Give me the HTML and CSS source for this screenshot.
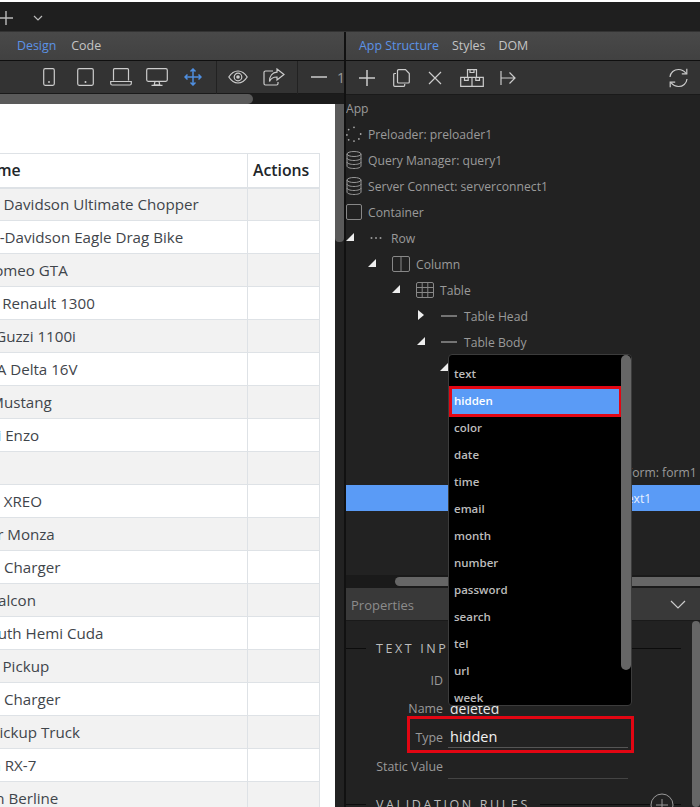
FILE: index.html
```html
<!DOCTYPE html>
<html lang="en">
<head>
<meta charset="utf-8">
<title>App Structure</title>
<link rel="stylesheet" href="styles.css">
</head>
<body>
<div class="app">
  <div class="titlebar">
    <svg class="tb-plus" width="14" height="18" viewBox="0 0 14 18"><path d="M6 2v14M-3 9h16" stroke="#bbb" stroke-width="1.400" fill="none"/></svg>
    <svg class="tb-chev" width="12" height="8" viewBox="0 0 12 8"><path d="M2 2l4 4 4-4" stroke="#bbb" stroke-width="1.200" fill="none"/></svg>
  </div>
  <div class="main">
    <section class="pane-left">
      <nav class="tabs tabs-left"><span class="tab active">Design</span><span class="tab">Code</span></nav>
      <div class="toolbar">
        <span class="slot"><svg width="12" height="18" viewBox="0 0 12 18"><rect x=".7" y=".7" width="10.600" height="16.600" rx="1.500" class="ico"/><circle cx="6" cy="14" r=".9" fill="#ccc"/></svg></span>
        <span class="slot"><svg width="17" height="18" viewBox="0 0 17 18"><rect x=".7" y=".7" width="15.600" height="16.600" rx="1.500" class="ico"/><circle cx="8.500" cy="14" r="1" fill="#ccc"/></svg></span>
        <span class="slot"><svg width="22" height="18" viewBox="0 0 22 18"><path d="M3.500 12.500V1.700a1 1 0 0 1 1-1h13a1 1 0 0 1 1 1v10.800M.7 13.500h20.600v2a1.500 1.500 0 0 1-1.500 1.500H2.200a1.500 1.500 0 0 1-1.500-1.500z" class="ico"/></svg></span>
        <span class="slot"><svg width="22" height="18" viewBox="0 0 22 18"><rect x=".7" y=".7" width="20.600" height="12.600" rx="1.500" class="ico"/><path d="M9 13.500l-.8 3.300h5.600L13 13.500M5.500 17.300h11" class="ico"/></svg></span>
        <span class="slot"><svg width="18" height="18" viewBox="0 0 18 18"><path d="M9 1v16M1 9h16M6.500 3.500L9 1l2.500 2.500M6.500 14.500L9 17l2.500-2.500M3.500 6.500L1 9l2.500 2.500M14.500 6.500L17 9l-2.500 2.500" stroke="#4f8fe0" stroke-width="1.500" fill="none"/></svg></span>
        <i class="sep"></i>
        <span class="slot"><svg width="20" height="14" viewBox="0 0 20 14"><path d="M.8 7C3.500 2.800 6.500 1 10 1s6.500 1.800 9.200 6C16.500 11.200 13.500 13 10 13S3.500 11.200.8 7z" class="ico"/><circle cx="10" cy="7" r="3.800" class="ico"/><circle cx="10" cy="7" r="1.800" fill="#ccc"/></svg></span>
        <span class="slot"><svg width="22" height="18" viewBox="0 0 22 18"><path d="M10 3H2.500A1.500 1.500 0 0 0 1 4.500v11A1.500 1.500 0 0 0 2.500 17h11a1.500 1.500 0 0 0 1.500-1.500V14" class="ico"/><path d="M14 1l7 5.500-7 5.500V9c-3.500 0-6 1-7.500 4.500C6.500 8 9.500 4.500 14 4.200z" class="ico"/></svg></span>
        <i class="sep"></i>
        <span class="slot"><svg width="16" height="4" viewBox="0 0 16 4"><path d="M0 2h16" stroke="#ccc" stroke-width="1.500"/></svg></span>
        <span class="zoomval">1</span>
      </div>
      <div class="hscroll-left"><i class="hthumb-left"></i></div>
      <div class="canvas-wrap">
        <div class="canvas">
          <table class="cars">
            <thead><tr><th class="c-name">Name</th><th class="c-act">Actions</th></tr></thead>
            <tbody>
              <tr><td>Harley Davidson Ultimate Chopper</td><td></td></tr>
              <tr><td>Harley-Davidson Eagle Drag Bike</td><td></td></tr>
              <tr><td>Alfa Romeo GTA</td><td></td></tr>
              <tr><td>Alpine Renault 1300</td><td></td></tr>
              <tr><td>Moto Guzzi 1100i</td><td></td></tr>
              <tr><td>LANCIA Delta 16V</td><td></td></tr>
              <tr><td>Ford Mustang</td><td></td></tr>
              <tr><td>Pagani Enzo</td><td></td></tr>
              <tr><td></td><td></td></tr>
              <tr><td>Suzuki XREO</td><td></td></tr>
              <tr><td>Master Monza</td><td></td></tr>
              <tr><td>Dodge Charger</td><td></td></tr>
              <tr><td>Ford Falcon</td><td></td></tr>
              <tr><td>Plymouth Hemi Cuda</td><td></td></tr>
              <tr><td>Austin Pickup</td><td></td></tr>
              <tr><td>Dodge Charger</td><td></td></tr>
              <tr><td>Ford Pickup Truck</td><td></td></tr>
              <tr><td>Mazda RX-7</td><td></td></tr>
              <tr><td>Lincoln Berline</td><td></td></tr>
            </tbody>
          </table>
        </div>
        <div class="vscroll-canvas"><i class="vthumb-canvas"></i></div>
      </div>
    </section>
    <section class="pane-right">
      <nav class="tabs tabs-right"><span class="tab active">App Structure</span><span class="tab">Styles</span><span class="tab">DOM</span></nav>
      <div class="toolbar toolbar-right">
        <span class="rslot"><svg width="16" height="16" viewBox="0 0 16 16"><path d="M8 0v16M0 8h16" stroke="#ccc" stroke-width="1.500"/></svg></span>
        <span class="rslot"><svg width="17" height="18" viewBox="0 0 17 18"><path d="M5.500.7h7l3.800 3.800v8.500a1 1 0 0 1-1 1h-9.800a1 1 0 0 1-1-1V1.700a1 1 0 0 1 1-1zM3 4.500H1.700a1 1 0 0 0-1 1v10.800a1 1 0 0 0 1 1h9a1 1 0 0 0 1-1V15" class="ico"/></svg></span>
        <span class="rslot"><svg width="14" height="14" viewBox="0 0 14 14"><path d="M1 1l12 12M13 1L1 13" stroke="#ccc" stroke-width="1.200"/></svg></span>
        <span class="rslot wide"><svg width="24" height="18" viewBox="0 0 24 18"><path d="M7.500.7h9v7.600h-9zM.7 8.300h11.300v9H.7zM12 8.300h11.300v9H12zM10 .7v2.800h4V.7M4.500 8.300v3h3.700v-3M15.800 8.300v3h3.700v-3" class="ico"/></svg></span>
        <span class="rslot"><svg width="16" height="14" viewBox="0 0 16 14"><path d="M1 0v14M1 7h14M9.500 1.500L15 7l-5.500 5.500" class="ico"/></svg></span>
        <span class="rslot refresh"><svg width="19" height="20" viewBox="0 0 19 20"><path d="M1 9C1.500 4.500 5 1.500 9.500 1.500c3 0 5.500 1.200 7.500 3.800M18 11c-.5 4.500-4 7.500-8.500 7.500-3 0-5.500-1.200-7.500-3.800" class="ico"/><path d="M17.800.8v5h-5M1.200 19.200v-5h5" class="ico"/></svg></span>
      </div>
      <div class="tree">
        <div class="node lv-root"><span>App</span></div>
        <div class="node lv0"><svg class="nico" width="18" height="18" viewBox="0 0 18 18" fill="#aaa"><circle cx="9" cy="1.500" r="1"/><circle cx="3" cy="4" r="1"/><circle cx="1" cy="10" r="1"/><circle cx="3" cy="15.500" r="1"/><circle cx="9" cy="17" r="1"/><circle cx="14.500" cy="14.500" r="1"/><circle cx="16.500" cy="9" r="1"/></svg><span>Preloader: preloader1</span></div>
        <div class="node lv0"><svg class="nico" width="16" height="18" viewBox="0 0 16 18"><use href="#db"/></svg><span>Query Manager: query1</span></div>
        <div class="node lv0"><svg class="nico" width="16" height="18" viewBox="0 0 16 18"><use href="#db"/></svg><span>Server Connect: serverconnect1</span></div>
        <div class="node lv0"><svg class="nico" width="16" height="16" viewBox="0 0 16 16"><rect x=".5" y=".5" width="15" height="15" rx="1.500" class="dim"/></svg><span>Container</span></div>
        <div class="node lv1"><i class="tri"></i><svg class="nico" width="12" height="4" viewBox="0 0 12 4" fill="#999"><circle cx="1.500" cy="2" r="1"/><circle cx="6" cy="2" r="1"/><circle cx="10.500" cy="2" r="1"/></svg><span>Row</span></div>
        <div class="node lv2"><i class="tri"></i><svg class="nico" width="18" height="16" viewBox="0 0 18 16"><rect x=".5" y=".5" width="17" height="15" rx="1.500" class="dim"/><path d="M9 .5v15" class="dim"/></svg><span>Column</span></div>
        <div class="node lv3"><i class="tri"></i><svg class="nico" width="18" height="16" viewBox="0 0 18 16"><rect x=".5" y=".5" width="17" height="15" rx="1.500" class="dim"/><path d="M.5 5.500h17M.5 10.500h17M6.200 .5v15M11.800 .5v15" class="dim"/></svg><span>Table</span></div>
        <div class="node lv4"><i class="tri-right"></i><svg class="nico" width="16" height="2" viewBox="0 0 16 2"><path d="M0 1h16" stroke="#999" stroke-width="1.400"/></svg><span>Table Head</span></div>
        <div class="node lv4"><i class="tri"></i><svg class="nico" width="16" height="2" viewBox="0 0 16 2"><path d="M0 1h16" stroke="#999" stroke-width="1.400"/></svg><span>Table Body</span></div>
        <div class="node lv5"><i class="tri"></i></div>
        <div class="node"></div>
        <div class="node"></div>
        <div class="node"></div>
        <div class="node lv-form"><span>Form: form1</span></div>
        <div class="node lv-input selected"><span>Input: text1</span></div>
      </div>
      <div class="hscroll-right"><i class="hthumb-right"></i></div>
      <div class="props-head"><span>Properties</span><svg width="16" height="9" viewBox="0 0 16 9"><path d="M1 1l7 7 7-7" stroke="#ccc" stroke-width="1.200" fill="none"/></svg></div>
      <div class="props">
        <div class="props-body">
          <h3 class="group"><span>TEXT INPUT</span></h3>
          <div class="field f-id"><label>ID</label><div class="value"></div></div>
          <div class="field f-name"><label>Name</label><div class="value">deleted</div></div>
          <div class="field f-type"><label>Type</label><div class="value">hidden</div></div>
          <div class="field f-static"><label>Static Value</label><div class="value underlined"></div></div>
          <h3 class="group g2"><span>VALIDATION RULES</span><svg class="addrule" width="24" height="24" viewBox="0 0 24 24"><circle cx="12" cy="12" r="11" stroke="#999" fill="none"/><path d="M12 6v12M6 12h12" stroke="#999"/></svg></h3>
        </div>
        <div class="vscroll-props"></div>
      </div>
    </section>
  </div>
  <ul class="dropdown">
    <li>text</li>
    <li class="picked">hidden</li>
    <li>color</li>
    <li>date</li>
    <li>time</li>
    <li>email</li>
    <li>month</li>
    <li>number</li>
    <li>password</li>
    <li>search</li>
    <li>tel</li>
    <li>url</li>
    <li>week</li>
  </ul>
  <svg class="defs" width="0" height="0"><defs><g id="db" fill="none" stroke="#999"><ellipse cx="8" cy="3" rx="7" ry="2.500"/><path d="M1 3v12c0 1.400 3.100 2.500 7 2.500s7-1.100 7-2.500V3M1 7c0 1.400 3.100 2.500 7 2.500S15 8.400 15 7M1 11c0 1.400 3.100 2.500 7 2.500s7-1.100 7-2.500"/></g></defs></svg>
</div>
</body>
</html>
```

FILE: styles.css
```css
*, *::before, *::after { box-sizing: border-box; }
html, body { margin: 0; padding: 0; background: #fff; }
body { font-family: "Open Sans", "Noto Sans", sans-serif; font-size: 12.400px; }
.app { position: relative; width: 700px; height: 805px; margin-top: 2px; overflow: hidden; background: #222; }
.defs { position: absolute; }

.titlebar { height: 30px; background: #1f1f1f; display: flex; align-items: center; gap: 18px; border-bottom: 1px solid #333; }
.tb-chev { margin-top: 2px; }
.tb-plus { margin-top: 2px; flex: none; }

.main { display: flex; height: 775px; }
.pane-left { width: 344px; flex: none; display: flex; flex-direction: column; overflow: hidden; }
.pane-right { flex: 1; min-width: 0; display: flex; flex-direction: column; border-left: 2px solid #111; overflow: hidden; }

.tabs { height: 29px; flex: none; display: flex; align-items: center; background: linear-gradient(#494949, #414141); border-bottom: 1px solid #0f0f0f; gap: 13px; padding-bottom: 1px; }
.tabs-left { padding-left: 17px; gap: 15px; }
.tabs-right { padding-left: 13px; }
.tab { color: #c4c4c4; }
.tab.active { color: #5c93e6; }

.toolbar { height: 33px; flex: none; display: flex; align-items: center; padding-left: 31px; background: #333; border-bottom: 1px solid #1a1a1a; }
.slot { width: 36px; flex: none; display: flex; justify-content: center; align-items: center; }
.sep { width: 1px; height: 33px; flex: none; background: #222; margin: 0 3px 0 5px; }
.zoomval { color: #999; font-size: 14px; flex: none; }
.ico { fill: none; stroke: #ccc; stroke-width: 1.200; }
.dim { fill: none; stroke: #888; stroke-width: 1; }

.toolbar-right { height: 34px; padding-left: 4px; padding-right: 12px; }
.rslot { width: 34px; flex: none; display: flex; justify-content: center; align-items: center; }
.rslot.wide { width: 39px; }
.rslot.refresh { width: 19px; margin-left: auto; }

.hscroll-left { height: 10px; flex: none; background: #1c1c1c; }
.hthumb-left { display: block; width: 253px; height: 10px; background: #5a5a5a; border-radius: 0 5px 5px 0; }

.canvas-wrap { flex: 1; display: flex; min-height: 0; }
.canvas { width: 335px; flex: none; background: #fff; overflow: hidden; padding-top: 49px; }
.vscroll-canvas { flex: 1; background: #222; }
.vthumb-canvas { display: block; height: 138px; background: #5a5a5a; border-radius: 0 0 4px 4px; }

.cars { border-collapse: collapse; table-layout: fixed; width: 366px; margin-left: -47px; font-size: 15.150px; color: #3f454b; }
.cars th, .cars td { border: 1px solid #dee2e6; padding: 0 12px; height: 33px; text-align: left; white-space: nowrap; overflow: hidden; }
.cars td:first-child { padding-left: 0; }
.cars th { height: 34px; border-bottom-width: 2px; color: #212529; font-weight: 600; font-size: 15.800px; }
.cars th.c-name { padding-left: 21px; width: 294px; }
.cars th.c-act { padding: 0 0 0 5px; width: 72px; }
.cars tbody tr:nth-child(odd) { background: #f2f2f2; }

.tree { height: 480px; flex: none; background: #222; color: #9a9a9a; overflow: hidden; }
.node { height: 26px; display: flex; align-items: center; white-space: nowrap; position: relative; }
.node span { font-size: 12.150px; }
.nico { flex: none; }
.lv0 .nico { width: 16px; margin-right: 6px; }
.lv1 { padding-left: 24px; }
.lv1 .nico { margin-right: 9px; }
.lv2 { padding-left: 46px; }
.lv2 .nico { margin-right: 6px; }
.lv3 { padding-left: 70px; }
.lv3 .nico { margin-right: 6px; }
.lv4 { padding-left: 95px; }
.lv4 .nico { margin-right: 7px; }
.lv-form { padding-left: 280px; }
.lv-input { padding-left: 240px; }
.selected { background: #5a9bf6; color: #e8f0ff; }
.tri { position: absolute; left: 0; top: 8px; width: 0; height: 0; border-style: solid; border-width: 0 0 8px 8px; border-color: transparent transparent #eee transparent; }
.lv2 .tri { left: 22px; }
.lv3 .tri { left: 46px; }
.lv4 .tri { left: 71px; }
.lv5 .tri { left: 94px; }
.tri-right { position: absolute; left: 72px; top: 7px; width: 0; height: 0; border-style: solid; border-width: 5.500px 0 5.500px 6px; border-color: transparent transparent transparent #eee; }

.hscroll-right { height: 13px; flex: none; background: #1a1a1a; padding: 2px 0 0 49px; }
.hthumb-right { display: block; height: 9px; background: #666; border-radius: 5px 0 0 5px; }

.props-head { height: 33px; flex: none; display: flex; align-items: center; justify-content: space-between; padding: 1px 14px 0 5px; background: #393939; border-bottom: 1px solid #1a1a1a; color: #8c8c8c; font-size: 13px; }
.props { flex: 1; display: flex; min-height: 0; }
.props-body { flex: 1; min-width: 0; }
.vscroll-props { width: 8px; flex: none; background: #666; border-radius: 4px; }

.group { position: relative; margin: 18px 11px 0 0; height: 18px; display: flex; align-items: center; font-size: 12.500px; font-weight: 400; letter-spacing: 2.600px; color: #bdbdbd; }
.group::before { content: ""; width: 20px; height: 1px; background: #0c0c0c; margin-right: 10px; flex: none; }
.group::after { content: ""; flex: 1; height: 1px; background: #0c0c0c; margin-left: 10px; }
.g2 { margin-top: 16px; }
.addrule { position: absolute; right: 7px; top: -2px; background: #222; }

.field { display: flex; align-items: center; height: 28px; }
.field label { width: 97px; margin-right: 5px; text-align: right; color: #9a9a9a; flex: none; }
.value { width: 180px; height: 100%; display: flex; align-items: center; padding-left: 2px; color: #e8e8e8; font-size: 14px; }
.f-id { margin-top: 9px; }
.f-type { position: relative; height: 37px; margin-top: -6px; padding-top: 10px; align-items: flex-start; }
.f-type::before { content: ""; position: absolute; left: 61px; top: 0; width: 227px; height: 37px; border: 3px solid #e20613; }
.f-type label { line-height: 24px; }
.f-type .value { height: 22px; font-size: 14.500px; color: #f2f2f2; border-bottom: 1px solid #555; }
.f-static { height: 26px; }
.f-static .underlined { height: 25px; border-bottom: 1px solid #444; }

.dropdown { position: absolute; left: 448px; top: 352px; width: 184px; height: 352px; margin: 0; padding: 5px 0 0; list-style: none; background: #000; border: 1px solid #3c3c3c; border-radius: 4px; overflow: hidden; color: #bcbcbc; font-size: 11.500px; font-weight: 600; }
.dropdown::after { content: ""; position: absolute; right: 0; top: 0; width: 10px; height: 315px; background: #666; border-radius: 5px; }
.dropdown li { height: 27px; display: flex; align-items: center; padding-left: 5px; }
.dropdown li.picked { width: 173px; height: 31px; margin: -1px 0 -3px; padding: 0 0 3px 2px; background: #5a9bf6; color: #fff; border: 3px solid #e20613; }
```
